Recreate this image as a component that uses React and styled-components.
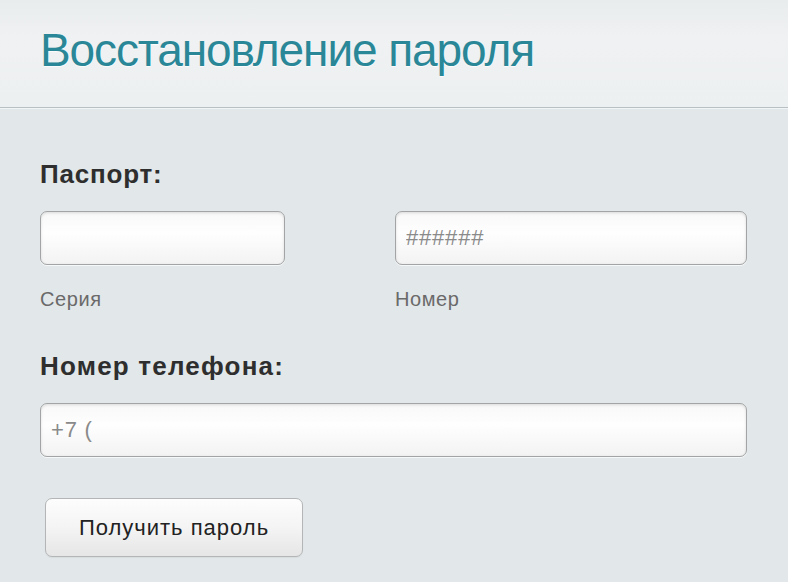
import React from "react";
import styled, { createGlobalStyle } from "styled-components";

const Global = createGlobalStyle`
  html, body { margin: 0; padding: 0; }
  body {
    font-family: "Liberation Sans", Arial, sans-serif;
    background: #e2e7e9;
  }
`;

const Page = styled.div`
  width: 788px;
  height: 582px;
  background: #e2e7e9;
  overflow: hidden;
  box-sizing: border-box;
`;

const Header = styled.header`
  height: 108px;
  box-sizing: border-box;
  padding: 27px 0 0 40px;
  background: linear-gradient(180deg, #e9eced 0%, #eff1f2 35%, #edf0f1 100%);
  border-bottom: 1px solid #b9c0c3;
  box-shadow: 0 1px 0 #f2f5f6;
`;

const Title = styled.h1`
  margin: 0;
  font-weight: normal;
  font-size: 46px;
  line-height: 46px;
  letter-spacing: -1.1px;
  color: #2a8797;
  text-shadow: 0 1px 1px rgba(255, 255, 255, 0.8);
`;

const Form = styled.form`
  display: flex;
  flex-direction: column;
  padding: 53px 41px 0 40px;
`;

const Label = styled.div`
  font-weight: bold;
  font-size: 26px;
  line-height: 26px;
  letter-spacing: ${(p) => p.$spacing}px;
  color: #2e2e2e;
  margin-bottom: ${(p) => p.$gap}px;
`;

const Row = styled.div`
  display: grid;
  grid-template-columns: 245px 352px;
  column-gap: 110px;
  margin-bottom: 44px;
`;

const Field = styled.div`
  display: flex;
  flex-direction: column;
  gap: 24px;
`;

const Input = styled.input`
  box-sizing: border-box;
  height: 54px;
  width: 100%;
  padding: 0 10px;
  border: 1px solid #a2a4a5;
  border-radius: 7px;
  background: linear-gradient(180deg, #f8f8f8 0%, #fefefe 40%, #f3f3f3 100%);
  box-shadow: inset 0 1px 3px rgba(0, 0, 0, 0.12), 0 1px 0 rgba(255, 255, 255, 0.7);
  font-family: "Liberation Sans", Arial, sans-serif;
  font-size: 22px;
  letter-spacing: 0.8px;
  color: #888;
  outline: none;
  &::placeholder {
    color: #8a8a8a;
  }
`;

const Hint = styled.div`
  font-size: 20px;
  line-height: 20px;
  letter-spacing: 0.6px;
  color: #6a6a6a;
`;

const Button = styled.button`
  align-self: flex-start;
  margin: 41px 0 0 5px;
  box-sizing: border-box;
  width: 258px;
  height: 59px;
  border: 1px solid #b3b5b6;
  border-radius: 7px;
  background: linear-gradient(180deg, #fdfdfd 0%, #f4f4f4 50%, #e6e6e6 100%);
  box-shadow: 0 1px 1px rgba(0, 0, 0, 0.05);
  font-family: "Liberation Sans", Arial, sans-serif;
  font-size: 22px;
  letter-spacing: 1px;
  color: #222;
  cursor: pointer;
`;

export default function App() {
  return (
    <Page>
      <Global />
      <Header>
        <Title>Восстановление пароля</Title>
      </Header>
      <Form onSubmit={(e) => e.preventDefault()}>
        <Label $gap={24} $spacing={0.8}>Паспорт:</Label>
        <Row>
          <Field>
            <Input type="text" />
            <Hint>Серия</Hint>
          </Field>
          <Field>
            <Input type="text" placeholder="######" />
            <Hint>Номер</Hint>
          </Field>
        </Row>
        <Label $gap={24} $spacing={1.2}>Номер телефона:</Label>
        <Input type="text" placeholder="+7 (" />
        <Button type="submit">Получить пароль</Button>
      </Form>
    </Page>
  );
}
